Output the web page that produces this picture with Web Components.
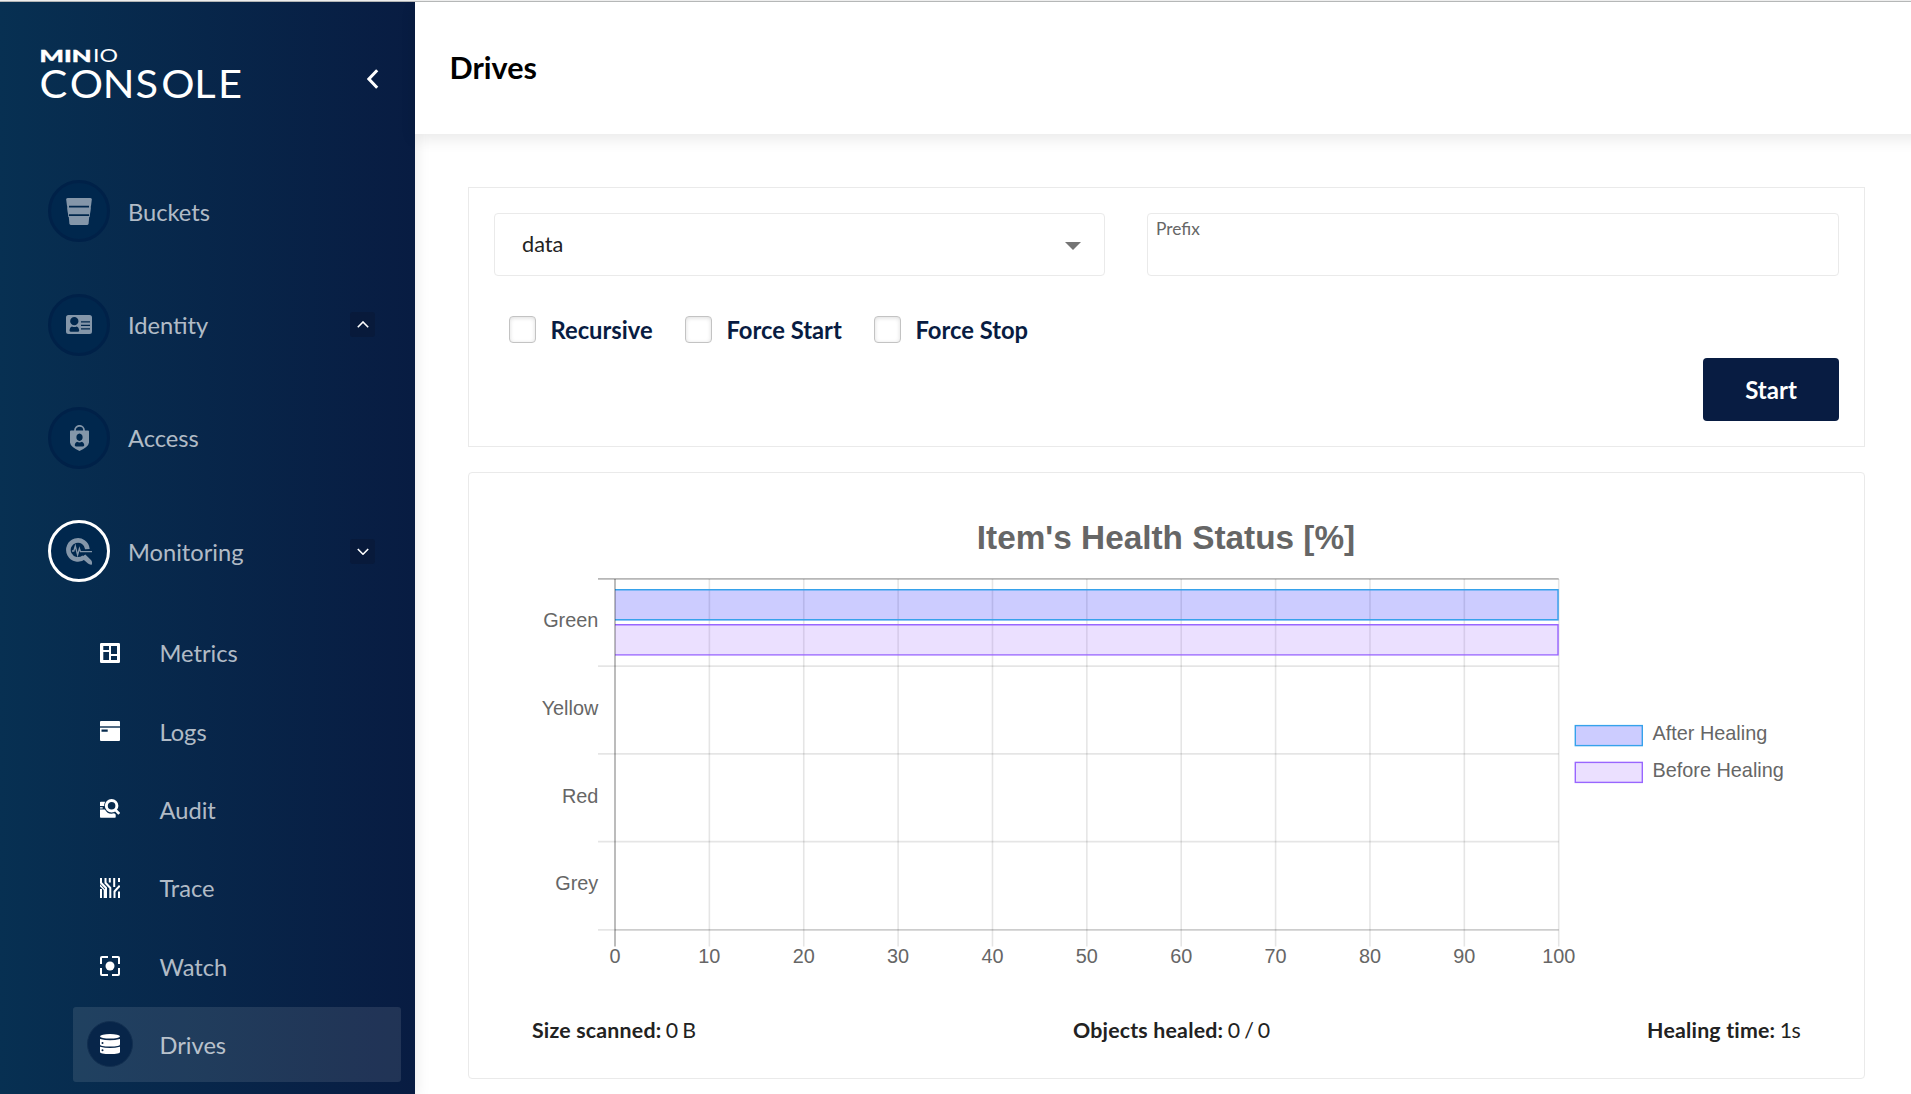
<!DOCTYPE html>
<html lang="en">
<head>
<meta charset="utf-8">
<title>MinIO Console</title>
<style>
html,body{margin:0;height:100%;background:#fff;overflow:hidden}
body{font-family:Lato,"Liberation Sans",sans-serif;color:#222}
</style>
</head>
<body>
<console-app></console-app>
<script>
const define = (name, css, html) => customElements.define(name, class extends HTMLElement {
  connectedCallback() {
    if (this.shadowRoot) return;
    const root = this.attachShadow({mode: 'open'});
    const body = typeof html === 'function' ? html(this) : html;
    root.innerHTML = `<style>*{box-sizing:border-box}${css}</style>${body}`;
  }
});

const icons = {
  buckets: [26, 27, `<path d="M1.6 0H24.4Q26 0 25.8 1.600L25 7.800H1L.2 1.600Q0 0 1.600 0Z"/><path d="M1.400 9.600H24.600L24 16.200H2Z"/><path d="M2.700 18H23.300L22.600 25.400Q22.400 27 20.800 27H5.200Q3.600 27 3.400 25.400Z"/><path d="M1 7H3V19H2.400ZM25 7H23V19H23.600Z"/>`],
  identity: [26, 19, `<path fill-rule="evenodd" d="M2.500 0H23.500Q26 0 26 2.500V16.500Q26 19 23.500 19H2.500Q0 19 0 16.500V2.500Q0 0 2.500 0ZM8.300 2A4 4 0 0 0 8.300 10.300A4 4 0 0 0 8.300 2ZM3.500 15.500Q3.500 16.800 5 16.800H11.800Q13.200 16.800 13.200 15.500Q12.800 12 10.600 11.400Q8.300 12.400 6 11.400Q3.800 12 3.500 15.500ZM15 6.200V7.500H24V6.200ZM15 9.700V11H24V9.700ZM15 13.200V14.500H24V13.200Z"/>`],
  access: [19, 26, `<path fill="none" stroke="currentColor" stroke-width="1.700" d="M5 6V5A4.500 4.200 0 0 1 14 5V6"/><path fill-rule="evenodd" d="M1 5.500H18Q19 5.500 19 6.500V17.500Q18.600 21.800 9.500 26Q.4 21.800 0 17.500V6.500Q0 5.500 1 5.500ZM9.500 8.500A3.700 3.800 0 0 0 9.500 16A3.700 3.800 0 0 0 9.500 8.500ZM7 16.700Q5 17.500 4.700 20Q4.700 21.400 6 21.400H13Q14.300 21.400 14.300 20Q14 17.500 12 16.700Q9.500 18.200 7 16.700Z"/>`],
  monitoring: [26, 27, `<path fill="none" stroke="currentColor" stroke-width="4.600" d="M21.400 11.200A9.500 9.500 0 1 0 18 19.200"/><path d="M15 19.500L19.300 16.500L25 22Q26.600 24 26 26.600Q23.600 27 22 25.600Z"/><path fill="none" stroke="currentColor" stroke-width="1.300" d="M6 13H7.800L9.300 8L11.600 17L13.400 10.500L14.500 13.700H26"/>`],
  metrics: [20, 20, `<path fill-rule="evenodd" d="M1.300 0H18.700Q20 0 20 1.300V18.700Q20 20 18.700 20H1.300Q0 20 0 18.700V1.300Q0 0 1.300 0ZM3.300 3V7H9V3ZM3.300 9V17H9V9ZM11 3V11H17V3ZM11 13V17H17V13Z"/>`],
  logs: [20, 20, `<path d="M1 0H19Q20 0 20 1V5H0V1Q0 0 1 0Z"/><path opacity=".3" d="M0 5H20V7H0Z"/><path fill-rule="evenodd" d="M0 7H20V19Q20 20 19 20H1Q0 20 0 19ZM1.500 8.500V10.700H7.700V8.500Z"/>`],
  audit: [20, 20, `<path d="M0 3.500Q0 2.800.8 2.800H5.200Q4 5 4.200 7H0ZM0 8.300H2.700V9.500H0ZM0 10.600H4.900Q8 16.200 14.200 14.300L15.700 15.600V18Q15.700 18.800 15 18.800H.8Q0 18.800 0 18Z"/><circle cx="11.600" cy="6.800" r="5.300" fill="none" stroke="currentColor" stroke-width="3"/><path stroke="currentColor" stroke-width="2.600" d="M15 10.500L19.200 14.900"/>`],
  trace: [20, 20, `<path fill="none" stroke="currentColor" stroke-width="2" d="M1 0V4.800L6 10V20M5.500 0V4.800L10.300 10V20M1 11V20M9.800 0V4.500M14.200 0V9M19 0V4M19 7.500V8.500L14.500 13.500V20M19 13.500V20"/><path d="M0 6L5 11.500V20H3.700V12L0 8.500Z"/>`],
  watch: [20, 20, `<path fill="none" stroke="currentColor" stroke-width="2" d="M8 1H2Q1 1 1 2V8M12 1H18Q19 1 19 2V8M8 19H2Q1 19 1 18V12M12 19H18Q19 19 19 18V12"/><circle cx="10" cy="10" r="4.500"/>`],
  drives: [20, 20, `<ellipse cx="10" cy="2.300" rx="10" ry="2.300"/><path fill-rule="evenodd" d="M0 5Q10 7.400 20 5V10.400Q20 12.500 10 12.500Q0 12.500 0 10.400ZM2.500 8A1 1 0 0 0 2.500 10A1 1 0 0 0 2.500 8Z"/><path fill-rule="evenodd" d="M0 12.800Q10 15.400 20 12.800V18Q20 20 10 20Q0 20 0 18ZM2.500 15.300A1 1 0 0 0 2.500 17.300A1 1 0 0 0 2.500 15.300Z"/>`],
  left: [12, 20, `<path fill="none" stroke="currentColor" stroke-width="3" d="M10.200 1.200L1.900 10L10.200 18.800"/>`],
  up: [12, 8, `<path fill="none" stroke="currentColor" stroke-width="1.600" d="M.8 6.300L6 1L11.200 6.300"/>`],
  down: [12, 8, `<path fill="none" stroke="currentColor" stroke-width="1.600" d="M.8 2L6 7.200L11.200 2"/>`],
  caret: [16, 8, `<path d="M0 0H16L8 8Z"/>`]
};

define('ui-icon', `:host{display:inline-flex}svg{display:block;fill:currentColor}`, el => {
  const [w, h, shape] = icons[el.getAttribute('name')];
  return `<svg width="${w}" height="${h}" viewBox="0 0 ${w} ${h}" aria-hidden="true">${shape}</svg>`;
});

define('console-logo', `:host{display:block}svg{display:block;fill:#fff;font-family:Lato,sans-serif}`, `
<svg width="230" height="80" viewBox="-10 -12 230 80">
  <text x="-1.500" y="15" font-size="17.500" font-weight="900" textLength="52" lengthAdjust="spacingAndGlyphs" stroke="#fff" stroke-width=".4">MIN</text>
  <text x="52" y="15" font-size="17.500" font-weight="400" textLength="25" lengthAdjust="spacingAndGlyphs">IO</text>
  <text transform="scale(1.080 1)" x="-1.300 26.600 57.300 87.500 111.300 142 164" y="50.800" font-size="38.500">CONSOLE</text>
</svg>`);

define('nav-item', `
:host{display:flex;align-items:center;height:113.330px;padding:0 40px 0 48px;color:rgba(255,255,255,.7)}
.disc{width:62px;height:62px;border-radius:50%;background:#00274d;border:3px solid #002148;display:flex;align-items:center;justify-content:center;color:#8496a9}
:host([active]) .disc{border-color:#fff}
.label{margin-left:18px;flex:1;font-size:23.650px;line-height:30px;padding-top:.6px}
.toggle{width:25px;height:25px;border-radius:3px;background:#081a3b;display:flex;align-items:center;justify-content:center;color:#fff}
`, el => `<span class="disc"><ui-icon name="${el.getAttribute('icon')}"></ui-icon></span><span class="label"><slot></slot></span>${el.hasAttribute('toggle') ? `<span class="toggle"><ui-icon name="${el.getAttribute('toggle')}"></ui-icon></span>` : ''}`);

define('nav-subitem', `
:host{display:flex;align-items:center;height:75px;padding-left:14px;border-radius:3px;color:rgba(255,255,255,.7)}
:host([active]){background:rgba(255,255,255,.1)}
.disc{width:46px;height:46px;border-radius:50%;display:flex;align-items:center;justify-content:center;color:#fff}
:host([active]) .disc{background:#072549;border:1px solid #122f50}
.label{margin-left:26.500px;font-size:23.650px;line-height:30px;padding-top:1.500px}
`, el => `<span class="disc"><ui-icon name="${el.getAttribute('icon')}"></ui-icon></span><span class="label"><slot></slot></span>`);

define('side-nav', `
:host{display:block;width:415px;flex:none;background:linear-gradient(90deg,#073052 0%,#081c42 100%);box-shadow:0 3px 15px rgba(0,0,0,.1);overflow:hidden}
header{display:flex;justify-content:space-between;height:152.700px;padding:33px 36px 0 31px;color:#fff}
header ui-icon{margin-top:34px}
.sub{display:flex;flex-direction:column;gap:3.300px;margin:7.200px 14px 0 73px}
`, `<header><console-logo></console-logo><ui-icon name="left"></ui-icon></header>
<nav>
<nav-item icon="buckets">Buckets</nav-item>
<nav-item icon="identity" toggle="up">Identity</nav-item>
<nav-item icon="access">Access</nav-item>
<nav-item icon="monitoring" toggle="down" active>Monitoring</nav-item>
<div class="sub">
<nav-subitem icon="metrics">Metrics</nav-subitem>
<nav-subitem icon="logs">Logs</nav-subitem>
<nav-subitem icon="audit">Audit</nav-subitem>
<nav-subitem icon="trace">Trace</nav-subitem>
<nav-subitem icon="watch">Watch</nav-subitem>
<nav-subitem icon="drives" active>Drives</nav-subitem>
</div>
</nav>`);

define('page-header', `
:host{display:flex;align-items:center;height:132px;margin-right:-20px;padding:0 35px 2px 34.500px;background:#fff;box-shadow:0 5px 15px rgba(0,0,0,.09)}
h1{margin:0;font-size:30.500px;line-height:36px;font-weight:700;color:#000}
`, `<h1><slot></slot></h1>`);

define('select-field', `
:host{display:flex;align-items:center;justify-content:space-between;height:63px;border:1px solid #eaeaea;border-radius:4px;padding:0 23px 0 27px;font-size:21.700px;color:#222}
span{padding-bottom:2px}
ui-icon{color:#757575;margin-top:3px}
`, `<span><slot></slot></span><ui-icon name="caret"></ui-icon>`);

define('text-field', `
:host{display:block;height:63px;border:1px solid #eaeaea;border-radius:4px;padding:4px 8px;font-size:17.330px;line-height:22px;color:#666}
`, `<slot></slot>`);

define('check-field', `
:host{display:flex;align-items:center;gap:14.500px;font-size:23.750px;line-height:30px;font-weight:700;color:#081c42}
i{width:27px;height:27px;margin-bottom:1px;border:1px solid #c3c3c3;border-radius:4px;background:#fff;box-shadow:inset 0 1px 4px rgba(0,0,0,.14)}
`, `<i></i><span><slot></slot></span>`);

define('heal-form', `
:host{display:block;height:260px;border:1px solid #eaeaea;padding:25px}
.fields{display:grid;grid-template-columns:611px 692px;justify-content:space-between}
.checks{display:flex;margin:39px 0 0 15px;height:30px}
check-field:nth-child(1){width:176px}
check-field:nth-child(2){width:189px}
.actions{display:flex;justify-content:flex-end;margin-top:13px}
button{width:136px;height:63px;border:0;border-radius:4px;background:#081c42;color:#fff;font:700 24px Lato,sans-serif;padding:0}
`, `<div class="fields"><select-field>data</select-field><text-field>Prefix</text-field></div>
<div class="checks"><check-field>Recursive</check-field><check-field>Force Start</check-field><check-field>Force Stop</check-field></div>
<div class="actions"><button>Start</button></div>`);

define('health-chart', `
:host{display:block}
svg{display:block;font-family:"Liberation Sans",Arial,sans-serif;font-size:19.850px;fill:#666}
.grid{stroke:rgba(0,0,0,.1);stroke-width:1.600}
`, () => {
  const x0 = 615, x1 = 1558.700, y0 = 578.900, step = 87.750, y1 = y0 + 4 * step;
  let s = '';
  for (let i = 0; i <= 10; i++) {
    const x = x0 + i * (x1 - x0) / 10;
    s += `<path class="grid" d="M${x} ${y0}V946.500"/><text x="${x}" y="963" text-anchor="middle">${i * 10}</text>`;
  }
  for (let i = 0; i <= 4; i++) s += `<path class="grid" d="M598 ${y0 + i * step - (i % 4 ? .5 : 0)}H${x1}"/>`;
  s += `<path stroke="rgba(0,0,0,.2)" stroke-width="1.600" d="M598 ${y0}H${x1}"/><path stroke="rgba(0,0,0,.1)" stroke-width="1.600" d="M${x0} ${y1}H${x1}"/>`;
  const bar = (y, fill, line) => `<path d="M${x0} ${y}H${x1}V${y + 31.500}H${x0}Z" fill="${fill}"/><path fill="none" stroke="${line}" stroke-width="1.400" d="M${x0} ${y + .700}H${x1 - .700}V${y + 30.800}H${x0}"/>`;
  s += bar(589, 'rgba(0,0,255,.2)', '#36a2eb') + bar(624.100, 'rgba(153,102,255,.2)', '#96f');
  s += `<path stroke="rgba(0,0,0,.25)" stroke-width="1.600" d="M${x0} ${y0}V946.500"/>`;
  ['Green', 'Yellow', 'Red', 'Grey'].forEach((t, i) => s += `<text x="598.300" y="${627 + i * 87.800}" text-anchor="end">${t}</text>`);
  const key = (y, fill, line, t) => `<rect x="1575.300" y="${y}" width="67" height="20" fill="${fill}" stroke="${line}" stroke-width="1.400"/><text x="1652.500" y="${y + 14.500}">${t}</text>`;
  s += key(725.600, '#ccf', '#36a2eb', 'After Healing') + key(762.400, '#ebe0ff', '#96f', 'Before Healing');
  return `<svg width="1330" height="480" viewBox="500 500 1330 480"><text x="1166" y="549" text-anchor="middle" font-size="33.330" font-weight="700">Item's Health Status [%]</text>${s}</svg>`;
});

define('heal-stat', `:host{display:block;font-size:21.330px;line-height:30px;color:#222}b{font-weight:700;letter-spacing:.2px}span{letter-spacing:-.7px;margin-left:-1px}`,
  el => `<b>${el.getAttribute('label')}:</b> <span><slot></slot></span>`);

define('heal-report', `
:host{display:block;height:607px;border:1px solid #eaeaea;border-radius:4px;padding:27px 31px 0;margin-top:25px}
.stats{display:flex;justify-content:space-between;margin:35px 33px 0 32px}
`, `<health-chart></health-chart><div class="stats"><heal-stat label="Size scanned">0 B</heal-stat><heal-stat label="Objects healed">0 / 0</heal-stat><heal-stat label="Healing time">1s</heal-stat></div>`);

define('console-app', `
:host{display:flex;height:1094px;border-top:1px solid #eee;background:#fff;overflow:hidden}
.frame{display:flex;flex:1;border-top:1px solid #b9bbbb;min-width:0}
main{flex:1;min-width:0}
.body{padding:53px 46px 0 53px}
`, `<div class="frame"><side-nav></side-nav><main><page-header>Drives</page-header><div class="body"><heal-form></heal-form><heal-report></heal-report></div></main></div>`);
</script>
</body>
</html>
